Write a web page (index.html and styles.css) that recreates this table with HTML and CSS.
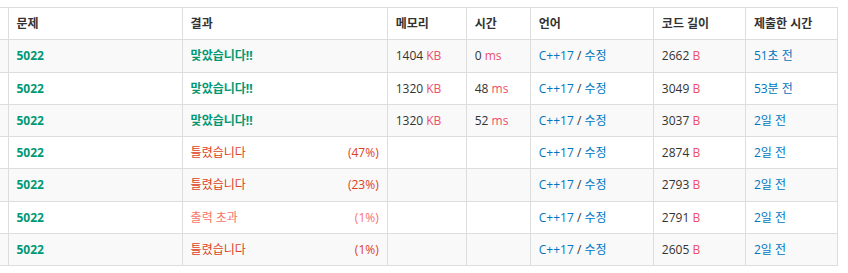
FILE: index.html
```html
<!DOCTYPE html>
<html lang="ko">
<head>
<meta charset="utf-8">
<link rel="stylesheet" href="styles.css">
</head>
<body>
<table class="status">
  <colgroup>
    <col class="c-id"><col class="c-prob"><col class="c-res"><col class="c-mem"><col class="c-time"><col class="c-lang"><col class="c-len"><col class="c-date">
  </colgroup>
  <thead>
    <tr><th></th><th>문제</th><th>결과</th><th>메모리</th><th>시간</th><th>언어</th><th>코드 길이</th><th>제출한 시간</th></tr>
  </thead>
  <tbody>
    <tr><td></td><td><a class="prob">5022</a></td><td><span class="ac">맞았습니다!!</span></td><td>1404 <span class="unit">KB</span></td><td>0 <span class="unit">ms</span></td><td><a class="link">C++17</a> / <a class="link">수정</a></td><td>2662 <span class="unit">B</span></td><td><a class="link">51초 전</a></td></tr>
    <tr><td></td><td><a class="prob">5022</a></td><td><span class="ac">맞았습니다!!</span></td><td>1320 <span class="unit">KB</span></td><td>48 <span class="unit">ms</span></td><td><a class="link">C++17</a> / <a class="link">수정</a></td><td>3049 <span class="unit">B</span></td><td><a class="link">53분 전</a></td></tr>
    <tr><td></td><td><a class="prob">5022</a></td><td><span class="ac">맞았습니다!!</span></td><td>1320 <span class="unit">KB</span></td><td>52 <span class="unit">ms</span></td><td><a class="link">C++17</a> / <a class="link">수정</a></td><td>3037 <span class="unit">B</span></td><td><a class="link">2일 전</a></td></tr>
    <tr><td></td><td><a class="prob">5022</a></td><td><div class="res"><span class="wa">틀렸습니다</span><span class="wa">(47%)</span></div></td><td></td><td></td><td><a class="link">C++17</a> / <a class="link">수정</a></td><td>2874 <span class="unit">B</span></td><td><a class="link">2일 전</a></td></tr>
    <tr><td></td><td><a class="prob">5022</a></td><td><div class="res"><span class="wa">틀렸습니다</span><span class="wa">(23%)</span></div></td><td></td><td></td><td><a class="link">C++17</a> / <a class="link">수정</a></td><td>2793 <span class="unit">B</span></td><td><a class="link">2일 전</a></td></tr>
    <tr><td></td><td><a class="prob">5022</a></td><td><div class="res"><span class="ole">출력 초과</span><span class="ole">(1%)</span></div></td><td></td><td></td><td><a class="link">C++17</a> / <a class="link">수정</a></td><td>2791 <span class="unit">B</span></td><td><a class="link">2일 전</a></td></tr>
    <tr><td></td><td><a class="prob">5022</a></td><td><div class="res"><span class="wa">틀렸습니다</span><span class="wa">(1%)</span></div></td><td></td><td></td><td><a class="link">C++17</a> / <a class="link">수정</a></td><td>2605 <span class="unit">B</span></td><td><a class="link">2일 전</a></td></tr>
  </tbody>
</table>
</body>
</html>
```

FILE: styles.css
```css
html, body {
  margin: 0;
  padding: 0;
  background: #fff;
}
body {
  font-family: "Open Sans", "Noto Sans CJK KR", sans-serif;
  font-size: 12px;
  color: #333;
  padding-top: 7px;
}
.status {
  border-collapse: collapse;
  table-layout: fixed;
  width: 838px;
}
.c-id { width: 8px; }
.c-prob { width: 174px; }
.c-res { width: 205px; }
.c-mem { width: 79px; }
.c-time { width: 64px; }
.c-lang { width: 123px; }
.c-len { width: 92px; }
.c-date { width: 92px; }

.status th, .status td {
  border: 1px solid #ddd;
  padding: 7px 8px;
  line-height: 17.25px;
  text-align: left;
  white-space: nowrap;
  overflow: hidden;
}
.status th:first-child, .status td:first-child {
  border-left: none;
  padding: 7px 0;
}
.status th {
  font-weight: 700;
  color: #333;
}
.status tbody tr:nth-child(odd) {
  background: #f9f9f9;
}
.prob {
  color: #009874;
  font-weight: 700;
}
.ac {
  color: #009874;
  font-weight: 700;
}
.wa {
  color: #dd4124;
}
.ole {
  color: #fa7268;
}
.unit {
  color: #ec4e6c;
}
.link {
  color: #0076c0;
}
.res {
  display: flex;
  justify-content: space-between;
}
```
